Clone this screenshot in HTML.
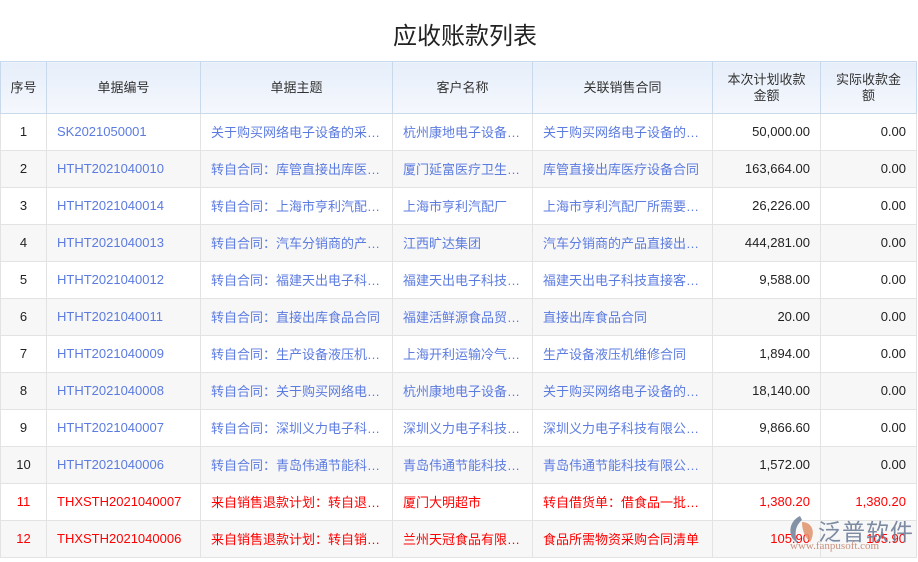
<!DOCTYPE html>
<html><head><meta charset="utf-8"><style>
*{margin:0;padding:0;box-sizing:border-box}
body{width:918px;height:562px;background:#fff;font-family:"Liberation Sans","Noto Sans CJK SC",sans-serif;overflow:hidden;position:relative}
h1{position:absolute;left:0;width:930px;top:16px;text-align:center;font-size:24px;font-weight:normal;color:#222;font-family:"Liberation Sans","Noto Sans CJK SC",sans-serif}
table{position:absolute;left:0;top:61px;border-collapse:collapse;table-layout:fixed;font-size:13px}
td,th{border:1px solid #e3e3e3;height:37px;white-space:nowrap;overflow:hidden;padding:0 10px}
th{height:52px;font-weight:normal;color:#333;background:linear-gradient(#e6eefa,#f5f8fd);border-color:#c9d9ec;text-align:center;line-height:16px;white-space:normal;padding:0 6px}
th.w{padding:0 14px}
tr{background:#fff}
tbody tr:nth-child(even){background:#f7f7f7}
td{color:#5b7be0;text-overflow:clip;padding-bottom:1px}
td:first-child{color:#222;text-align:center;padding:0 0 1px}
td.n{color:#222;text-align:right}
tr.r td{color:#f00}
</style></head><body>
<h1>应收账款列表</h1>
<table>
<colgroup><col style="width:46px"><col style="width:154px"><col style="width:192px"><col style="width:140px"><col style="width:180px"><col style="width:108px"><col style="width:96px"></colgroup>
<thead><tr><th>序号</th><th>单据编号</th><th>单据主题</th><th>客户名称</th><th>关联销售合同</th><th class="w">本次计划收款金额</th><th class="w">实际收款金额</th></tr></thead>
<tbody>
<tr><td>1</td><td>SK2021050001</td><td>关于购买网络电子设备的采…</td><td>杭州康地电子设备…</td><td>关于购买网络电子设备的…</td><td class="n">50,000.00</td><td class="n">0.00</td></tr>
<tr><td>2</td><td>HTHT2021040010</td><td>转自合同：库管直接出库医…</td><td>厦门延富医疗卫生…</td><td>库管直接出库医疗设备合同</td><td class="n">163,664.00</td><td class="n">0.00</td></tr>
<tr><td>3</td><td>HTHT2021040014</td><td>转自合同：上海市亨利汽配…</td><td>上海市亨利汽配厂</td><td>上海市亨利汽配厂所需要…</td><td class="n">26,226.00</td><td class="n">0.00</td></tr>
<tr><td>4</td><td>HTHT2021040013</td><td>转自合同：汽车分销商的产…</td><td>江西旷达集团</td><td>汽车分销商的产品直接出…</td><td class="n">444,281.00</td><td class="n">0.00</td></tr>
<tr><td>5</td><td>HTHT2021040012</td><td>转自合同：福建天出电子科…</td><td>福建天出电子科技…</td><td>福建天出电子科技直接客…</td><td class="n">9,588.00</td><td class="n">0.00</td></tr>
<tr><td>6</td><td>HTHT2021040011</td><td>转自合同：直接出库食品合同</td><td>福建活鲜源食品贸…</td><td>直接出库食品合同</td><td class="n">20.00</td><td class="n">0.00</td></tr>
<tr><td>7</td><td>HTHT2021040009</td><td>转自合同：生产设备液压机…</td><td>上海开利运输冷气…</td><td>生产设备液压机维修合同</td><td class="n">1,894.00</td><td class="n">0.00</td></tr>
<tr><td>8</td><td>HTHT2021040008</td><td>转自合同：关于购买网络电…</td><td>杭州康地电子设备…</td><td>关于购买网络电子设备的…</td><td class="n">18,140.00</td><td class="n">0.00</td></tr>
<tr><td>9</td><td>HTHT2021040007</td><td>转自合同：深圳义力电子科…</td><td>深圳义力电子科技…</td><td>深圳义力电子科技有限公…</td><td class="n">9,866.60</td><td class="n">0.00</td></tr>
<tr><td>10</td><td>HTHT2021040006</td><td>转自合同：青岛伟通节能科…</td><td>青岛伟通节能科技…</td><td>青岛伟通节能科技有限公…</td><td class="n">1,572.00</td><td class="n">0.00</td></tr>
<tr class="r"><td>11</td><td>THXSTH2021040007</td><td>来自销售退款计划：转自退…</td><td>厦门大明超市</td><td>转自借货单：借食品一批…</td><td class="n">1,380.20</td><td class="n">1,380.20</td></tr>
<tr class="r"><td>12</td><td>THXSTH2021040006</td><td>来自销售退款计划：转自销…</td><td>兰州天冠食品有限…</td><td>食品所需物资采购合同清单</td><td class="n">105.90</td><td class="n">105.90</td></tr>
</tbody></table>
<svg style="position:absolute;left:786px;top:514px" width="32" height="32" viewBox="0 0 32 32"><path d="M14 2 C6 6 2 14 6 24 L12 30 C8 20 9 12 16 6Z" fill="#6f7f99" opacity=".85"/><path d="M16 8 C26 8 30 18 24 28 C20 24 16 18 16 8Z" fill="#e0926a" opacity=".85"/></svg>
<div style="position:absolute;left:818px;top:513px;font-size:23px;color:#6f7f99;letter-spacing:1px;opacity:.9">泛普软件</div>
<div style="position:absolute;left:790px;top:540px;font-size:11px;color:#c0806a;font-family:'Liberation Serif',serif;opacity:.85">www.fanpusoft.com</div>
</body></html>
